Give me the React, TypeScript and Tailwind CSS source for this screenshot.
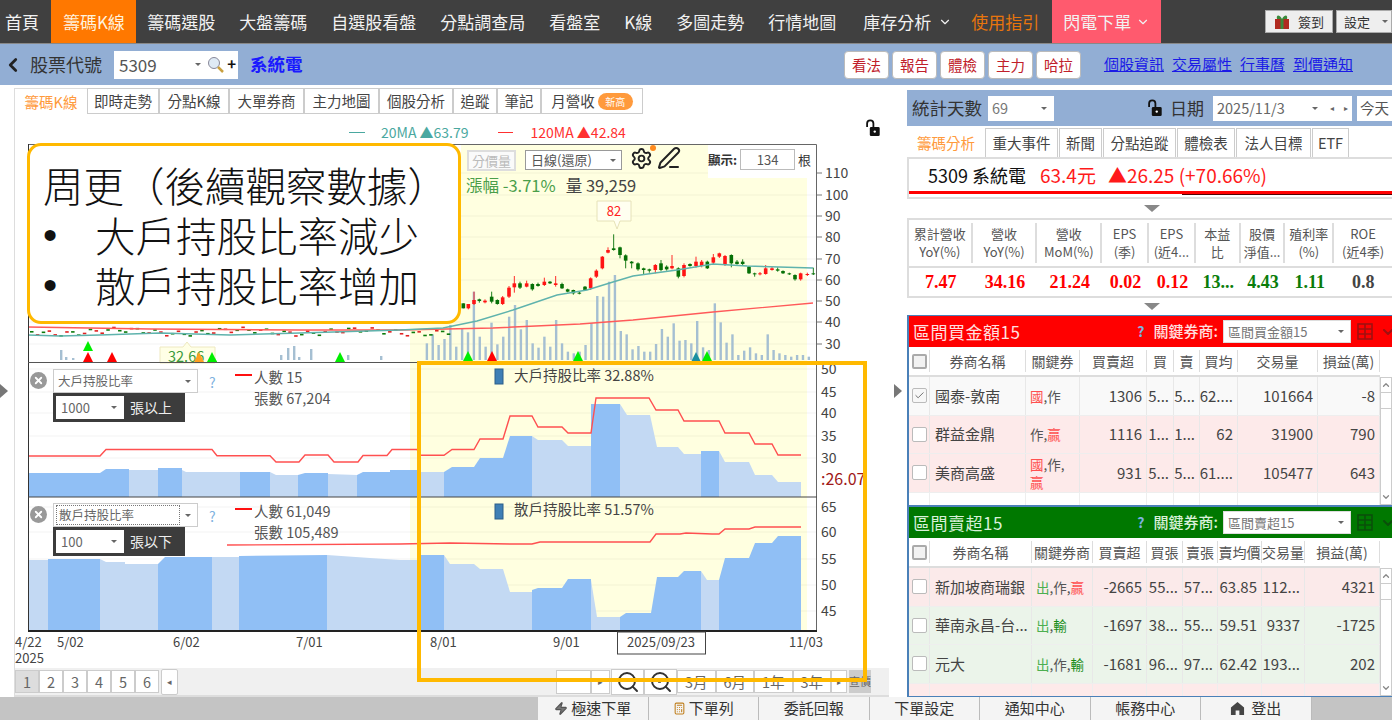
import React from 'react';
import { ChevronDown, ChevronLeft, ChevronUp, Search, Settings, PenLine, Zap, Check, Calculator, X } from 'lucide-react';

const navItems = ['籌碼選股', '大盤籌碼', '自選股看盤', '分點調查局', '看盤室', 'K線', '多圖走勢', '行情地圖'];
const chartTabs = [
  { label: '即時走勢', w: 'w-[72px]' },
  { label: '分點K線', w: 'w-[70px]' },
  { label: '大單券商', w: 'w-[75px]' },
  { label: '主力地圖', w: 'w-[75px]' },
  { label: '個股分析', w: 'w-[74px]' },
  { label: '追蹤', w: 'w-[44px]' },
  { label: '筆記', w: 'w-[44px]' },
];
const sideTabs = [
  { label: '重大事件', w: 'w-[73px]' },
  { label: '新聞', w: 'w-[43px]' },
  { label: '分點追蹤', w: 'w-[73px]' },
  { label: '體檢表', w: 'w-[58px]' },
  { label: '法人目標', w: 'w-[75px]' },
  { label: 'ETF', w: 'w-[37px]' },
];
const stats = [
  { top: '累計營收', sub: 'YoY(%)', val: '7.47', color: 'text-[#ff0000]', w: 'w-[64px]' },
  { top: '營收', sub: 'YoY(%)', val: '34.16', color: 'text-[#ff0000]', w: 'w-[65px]' },
  { top: '營收', sub: 'MoM(%)', val: '21.24', color: 'text-[#ff0000]', w: 'w-[65px]' },
  { top: 'EPS', sub: '(季)', val: '0.02', color: 'text-[#ff0000]', w: 'w-[47px]' },
  { top: 'EPS', sub: '(近4...', val: '0.12', color: 'text-[#ff0000]', w: 'w-[47px]' },
  { top: '本益', sub: '比', val: '13...', color: 'text-[#0a7d0a]', w: 'w-[45px]' },
  { top: '股價', sub: '淨值...', val: '4.43', color: 'text-[#0a7d0a]', w: 'w-[45px]' },
  { top: '殖利率', sub: '(%)', val: '1.11', color: 'text-[#0a7d0a]', w: 'w-[49px]' },
  { top: 'ROE', sub: '(近4季)', val: '0.8', color: 'text-[#444]', w: 'w-[58px]' },
];

const keyColors: Record<string, string> = {
  國: 'text-[#ff5050]',
  贏: 'text-[#ff5050]',
  作: 'text-[#555]',
  出: 'text-[#4caf50]',
  輸: 'text-[#138a13]',
};

const buyRows = [
  { checked: true, bg: 'bg-[#f9f9f9]', cells: ['國泰-敦南', '國,作', '1306', '5...', '5...', '62....', '101664', '-8'] },
  { bg: 'bg-[#fdeaea]', cells: ['群益金鼎', '作,贏', '1116', '1...', '1...', '62', '31900', '790'] },
  { bg: 'bg-[#fdeaea]', cells: ['美商高盛', '國,作,贏', '931', '5...', '5...', '61....', '105477', '643'] },
];
const sellRows = [
  { bg: 'bg-[#fbeaea]', cells: ['新加坡商瑞銀', '出,作,贏', '-2665', '55...', '57...', '63.85', '112...', '4321'] },
  { bg: 'bg-[#ebf4ea]', cells: ['華南永昌-台...', '出,輸', '-1697', '38...', '55...', '59.51', '9337', '-1725'] },
  { bg: 'bg-[#ebf4ea]', cells: ['元大', '出,作,輸', '-1681', '96...', '97...', '62.42', '193...', '202'] },
];

// candles: [x, bodyTop, bodyBottom, wickTop, wickBottom, up]
const candles: [number, number, number, number, number, number][] = [
  [190, 490, 505, 490, 505, 0], [205, 492, 505, 492, 508, 1], [222, 480, 492, 455, 495, 1], [238, 478, 483, 476, 488, 0],
  [255, 482, 487, 478, 490, 1], [275, 470, 485, 455, 490, 0], [292, 480, 492, 478, 494, 0], [308, 472, 492, 468, 495, 1],
  [327, 443, 470, 438, 474, 1], [343, 430, 442, 408, 458, 1], [360, 430, 443, 425, 447, 0], [380, 430, 440, 422, 442, 1],
  [397, 432, 448, 430, 452, 0], [414, 432, 438, 428, 440, 0], [433, 425, 435, 413, 438, 1], [450, 425, 430, 423, 432, 0],
  [467, 430, 435, 408, 440, 1], [486, 432, 445, 428, 447, 0], [503, 448, 455, 446, 457, 0], [520, 450, 460, 449, 464, 0],
  [538, 458, 460, 456, 463, 0], [555, 440, 450, 438, 452, 0], [572, 415, 445, 412, 450, 1], [589, 392, 410, 388, 414, 1],
  [607, 350, 385, 348, 388, 1], [624, 330, 338, 322, 340, 1], [641, 325, 330, 283, 332, 0], [660, 322, 345, 320, 355, 0],
  [677, 346, 362, 343, 385, 0], [695, 365, 370, 363, 385, 0], [714, 370, 388, 367, 392, 0], [731, 385, 390, 383, 403, 0],
  [748, 388, 392, 386, 398, 0], [766, 375, 390, 372, 400, 1], [783, 370, 390, 360, 394, 0], [800, 380, 388, 376, 392, 0],
  [816, 378, 385, 345, 388, 1], [835, 385, 410, 382, 415, 0], [852, 375, 408, 370, 412, 1], [870, 372, 378, 370, 380, 0],
  [888, 365, 378, 350, 383, 1], [905, 365, 378, 360, 382, 1], [922, 365, 385, 362, 387, 0], [940, 352, 368, 342, 372, 1],
  [958, 340, 350, 338, 354, 1], [975, 348, 375, 345, 378, 1], [994, 345, 370, 343, 382, 0], [1011, 365, 372, 360, 374, 0],
  [1028, 365, 372, 358, 376, 0], [1047, 380, 400, 378, 402, 0], [1064, 400, 403, 398, 410, 0], [1080, 400, 403, 396, 406, 1],
  [1097, 385, 402, 375, 404, 1], [1116, 385, 390, 380, 392, 1], [1133, 388, 392, 382, 395, 0], [1149, 393, 400, 391, 402, 0],
  [1168, 400, 403, 398, 405, 0], [1185, 405, 418, 403, 422, 0], [1202, 400, 418, 398, 422, 1], [1222, 402, 405, 398, 408, 1],
  [1240, 400, 403, 383, 405, 0],
];
const volumes = [610, 583, 615, 597, 555, 620, 565, 577, 455, 590, 620, 548, 613, 590, 530, 495, 568, 540, 610, 623, 590, 620, 540, 610, 635, 640, 635, 615, 550, 468, 470, 425, 405, 573, 583, 628, 618, 635, 635, 612, 567, 590, 550, 602, 600, 610, 543, 622, 630, 490, 547, 608, 583, 645, 632, 622, 640, 645, 583, 630, 640, 645, 650, 645, 645, 650];
const leftVolumes = [[60, 350], [65, 357], [72, 358], [280, 355], [287, 348], [293, 346], [298, 357], [310, 349], [347, 355], [380, 356]];

// area bands: [x0, top0, x1, top1, dark]
const bands2: number[][] = [
  [28, 473, 100, 473, 1], [100, 473, 106, 469, 1], [106, 469, 129, 469, 1], [129, 470, 158, 470, 0], [158, 468, 182, 468, 1], [182, 470, 186, 472, 0],
  [186, 472, 240, 472, 0], [240, 472, 270, 472, 1], [270, 472, 276, 475, 0], [276, 475, 298, 475, 0], [298, 475, 305, 473, 1], [305, 473, 328, 473, 1],
  [328, 474, 357, 475, 0], [357, 475, 363, 472, 1], [363, 472, 390, 472, 1], [390, 470, 417, 470, 1], [417, 472, 444, 472, 0], [444, 472, 452, 467, 1],
  [452, 467, 474, 467, 1], [474, 467, 480, 458, 1], [480, 458, 503, 458, 1], [503, 458, 510, 436, 1], [510, 436, 532, 436, 1], [532, 436, 538, 440, 0],
  [538, 440, 562, 440, 0], [562, 440, 568, 446, 0], [568, 446, 591, 446, 0], [591, 404, 620, 404, 1], [620, 404, 627, 415, 0], [627, 415, 650, 415, 0],
  [650, 415, 657, 447, 0], [657, 447, 678, 447, 0], [678, 447, 684, 454, 0], [684, 454, 701, 454, 0], [701, 451, 719, 451, 1], [719, 451, 725, 462, 0],
  [725, 462, 749, 462, 0], [749, 462, 755, 475, 0], [755, 475, 772, 475, 0], [772, 475, 778, 482, 0], [778, 482, 801, 482, 0],
];
const bands3: number[][] = [
  [28, 560, 48, 560, 0], [48, 559, 100, 559, 1], [100, 559, 106, 562, 0], [106, 562, 125, 562, 0], [125, 564, 158, 564, 0], [158, 564, 165, 557, 1],
  [165, 557, 212, 557, 1], [212, 557, 239, 557, 0], [239, 556, 327, 555, 1], [327, 555, 370, 558, 0], [370, 558, 400, 560, 0], [400, 560, 417, 560, 0],
  [417, 555, 444, 555, 1], [444, 555, 450, 564, 0], [450, 564, 474, 564, 0], [474, 564, 480, 569, 0], [480, 569, 503, 569, 0], [503, 569, 510, 592, 0],
  [510, 592, 532, 592, 0], [532, 590, 538, 588, 1], [538, 588, 562, 588, 1], [562, 588, 568, 579, 1], [568, 579, 591, 579, 1], [591, 580, 597, 617, 0],
  [597, 617, 620, 617, 0], [620, 617, 626, 613, 1], [626, 613, 651, 613, 1], [651, 613, 657, 577, 1], [657, 577, 678, 577, 1], [678, 577, 684, 571, 1],
  [684, 571, 701, 571, 1], [701, 571, 707, 580, 0], [707, 580, 719, 580, 0], [719, 580, 725, 558, 1], [725, 558, 749, 558, 1], [749, 558, 755, 543, 1],
  [755, 543, 772, 543, 1], [772, 543, 778, 536, 1], [778, 536, 801, 536, 1],
];

const big2 = '28,456 100,456 106,449.5 212,449.5 217,455.7 270,455.7 276,462 299,462 305,455 328,455 334,462 358,462 363,455.5 387,455.5 392,449.5 417,449.5 420,455.3 444,455.3 452,449.5 474,449.5 480,439 503,439 510,416 532,416 538,427 562,427 568,433 591,433 596,398 649,398 656,410 678,410 684,421 719,421 725,433 749,433 755,444 772,444 778,455 801,455';
const small3 = '227,545 400,544 450,543 510,544 532,544 540,542 600,542 650,542 656,534 680,534 686,533 712,534 719,534 725,529 749,529 755,527 801,527';
const ma20 = '28,335 60,336 100,335 160,333 230,335 300,333 400,330 443,328 477,321 513,310 557,295 587,290 613,282 633,276 677,270 713,264 747,266 813,268';
const ma120 = '28,327 150,329 300,330 400,330 493,328 580,324 633,320 713,312 813,303';

const axisTop = [[110, 173], [100, 195], [90, 216], [80, 237], [70, 259], [60, 280], [50, 301], [40, 322], [30, 344]];
const axis2 = [[50, 369], [45, 392], [40, 413], [35, 436], [30, 458]];
const axis3 = [[65, 507], [60, 532], [55, 559], [50, 585], [45, 611]];
const dates = [['5/02', 57], ['6/02', 173], ['7/01', 296], ['8/01', 430], ['9/01', 553], ['11/03', 789]] as const;
const markers = [
  [88, 341, '#00ee00'], [88, 352, '#ff0000'], [112, 352, '#ff0000'], [199, 352, '#ffa020'], [212, 352, '#00ee00'], [340, 352, '#00ee00'],
  [468, 351, '#00ee00'], [492, 351, '#ff0000'], [578, 351, '#00ee00'], [696, 352, '#1a8fa0'], [707, 351, '#00ee00'],
] as const;

function LockIcon({ className }: { className?: string }) {
  return (
    <svg viewBox="0 0 18 20" className={className}>
      <path d="M3 9V5a3.5 3.5 0 0 1 7 0v4" fill="none" stroke="#111" strokeWidth="2" />
      <rect x="6" y="9" width="11" height="10" rx="1.5" fill="#111" />
      <circle cx="11.5" cy="14" r="1.3" fill="#fff" />
    </svg>
  );
}

function Caret({ className = '' }: { className?: string }) {
  return <span className={`w-0 h-0 border-x-[3px] border-x-transparent border-t-[3px] border-t-[#666] ${className}`} />;
}

function GridIcon({ color }: { color: string }) {
  return (
    <svg viewBox="0 0 16 17" className="w-[16px] h-[17px]" fill="none" stroke={color} strokeWidth="1.6">
      <rect x="1" y="1" width="14" height="15" />
      <path d="M8 1v15M1 6h14M1 11h14" />
    </svg>
  );
}

function Box({ checked, dim }: { checked?: boolean; dim?: boolean }) {
  return (
    <span className={`w-[15px] h-[15px] border rounded-[2px] flex items-center justify-center ${dim ? 'border-[#bbb] bg-[#f7f7f7]' : 'border-[#bbb] bg-white'}`}>
      {checked && <Check className="w-[11px] h-[11px] text-[#666]" />}
    </span>
  );
}

function Keys({ text }: { text: string }) {
  const parts = text.split(',');
  return (
    <span className="text-[13.5px] leading-[18px] break-all">
      {parts.map((p, i) => (
        <span key={i} className="inline">
          <span className={keyColors[p]}>{p}</span>
          {i < parts.length - 1 && <span className="text-[#555]">,</span>}
        </span>
      ))}
    </span>
  );
}

function BrokerTable(props: {
  title: string;
  select: string;
  headBg: string;
  titleColor: string;
  iconColor: string;
  cols: string;
  heads: string[];
  rows: { checked?: boolean; bg: string; cells: string[] }[];
  fillBg: string;
}) {
  const { title, select, headBg, titleColor, iconColor, cols, heads, rows, fillBg } = props;
  return (
    <div className="h-[191px] border-l-2 border-y border-[#4a80b8] bg-white overflow-hidden flex flex-col">
      <div className={`h-[31px] shrink-0 flex items-center pl-[4px] ${headBg}`}>
        <span className={`text-[17px] tracking-[0.5px] ${titleColor}`}>{title}</span>
        <span className="ml-auto text-[#7fb2e0] font-bold text-[14px]">?</span>
        <span className={`ml-[9px] text-[15px] font-medium ${titleColor}`}>關鍵券商:</span>
        <div className="ml-[5px] w-[128px] h-[23px] bg-white border border-[#ddd] flex items-center px-[4px] text-[13px] text-[#777]">
          {select}
          <Caret className="ml-auto mr-[2px]" />
        </div>
        <span className="ml-[6px]"><GridIcon color={iconColor} /></span>
        <ChevronDown className="w-[16px] h-[16px] ml-[7px] -mr-[4px]" style={{ color: iconColor }} strokeWidth={3} />
      </div>
      <div className="flex flex-1 min-h-0">
        <div className="w-[471px] flex flex-col">
          <div className={`grid ${cols} h-[30px] shrink-0 border-b-2 border-[#ddd] text-[14px] text-[#555]`}>
            <div className="flex items-center justify-center border-r border-[#ddd] my-[3px]">
              <span className="w-[15px] h-[15px] border-2 border-[#aaa] bg-[#f2f2f2] rounded-[2px]" />
            </div>
            {heads.map((h) => (
              <div key={h} className="flex items-center justify-center border-r border-[#ddd] my-[3px] whitespace-nowrap overflow-hidden">{h}</div>
            ))}
          </div>
          {rows.map((r) => (
            <div key={r.cells[0]} className={`grid ${cols} h-[38.5px] shrink-0 border-b border-[#eee] text-[15px] text-[#444] ${r.bg}`}>
              <div className="flex items-center justify-center border-r border-[#e8e8e8]"><Box checked={r.checked} dim={r.checked} /></div>
              <div className="flex items-center px-[5px] border-r border-[#e8e8e8] whitespace-nowrap overflow-hidden">{r.cells[0]}</div>
              <div className="flex items-center px-[4px] border-r border-[#e8e8e8]"><Keys text={r.cells[1]} /></div>
              {r.cells.slice(2).map((c, i) => (
                <div key={i} className="flex items-center justify-end px-[4px] border-r border-[#e8e8e8] whitespace-nowrap overflow-hidden">{c}</div>
              ))}
            </div>
          ))}
          <div className={`grid ${cols} flex-1 ${fillBg}`}>
            {[0, 1, 2, 3, 4, 5, 6, 7, 8].map((i) => <div key={i} className="border-r border-[#eee]" />)}
          </div>
        </div>
        <div className="w-[12px] mt-[30px] border border-[#ccc] bg-white flex flex-col items-center">
          <ChevronUp className="w-[10px] h-[14px] text-[#888]" strokeWidth={3} />
          <div className="w-full h-[17px] border-y border-[#ccc]" />
          <ChevronDown className="w-[10px] h-[14px] text-[#888] mt-auto" strokeWidth={3} />
        </div>
      </div>
    </div>
  );
}

function PaneControls(props: { name: string; value: string; label: string; line1: string; line2: string; dotted?: boolean; top: string }) {
  return (
    <div className={`absolute left-[15px] ${props.top} w-[320px] h-[54px] text-[#555]`}>
      <span className="absolute left-0 top-[3px] w-[17px] h-[17px] rounded-full bg-[#999] flex items-center justify-center">
        <X className="w-[11px] h-[11px] text-white" strokeWidth={4} />
      </span>
      <div className="absolute left-[23px] top-0 w-[145px] h-[24px] bg-white border border-[#ccc] flex items-center px-[4px] text-[12.5px] text-[#666]">
        <span className={props.dotted ? 'border border-dotted border-[#777] w-[124px] -ml-[2px] pl-[2px]' : ''}>{props.name}</span>
        <Caret className="ml-auto mr-[2px]" />
      </div>
      <span className="absolute left-[179px] top-[3px] text-[#7fb2e0] text-[14px]">?</span>
      <div className="absolute left-[23px] top-[24px] w-[132px] h-[29px] bg-[#3c3c3c] flex items-center pl-[3px]">
        <div className="w-[68px] h-[23px] bg-white flex items-center px-[5px] text-[13px] text-[#666]">
          {props.value}
          <Caret className="ml-auto mr-[2px]" />
        </div>
        <span className="ml-[6px] text-[14px] text-[#eee]">{props.label}</span>
      </div>
      <span className="absolute left-[205px] top-[5px] w-[17px] h-[2px] bg-[#ff1010]" />
      <span className="absolute left-[224px] -top-[2px] text-[14.5px] leading-[20px] whitespace-nowrap">{props.line1}</span>
      <span className="absolute left-[224px] top-[19px] text-[14.5px] leading-[20px] whitespace-nowrap">{props.line2}</span>
    </div>
  );
}

function ChartSvg() {
  const leftCandles = Array.from({ length: 72 }, (_, i) => {
    const x = 30 + i * 5.87;
    const y = 331 + Math.sin(i * 1.7) * 2.5 + Math.sin(i * 0.31) * 2;
    return { x, y, up: Math.sin(i * 2.3) > 0.1 };
  });
  return (
    <svg viewBox="15 114 874 554" className="absolute inset-0 w-[874px] h-[554px]">
      <rect x="461" y="145" width="247" height="33" fill="#ffffe0" />
      <rect x="410" y="178" width="397" height="452" fill="#ffffe0" />
      {axisTop.concat(axis2, axis3).map(([, y]) => (
        <line key={y} x1="29" x2="816" y1={y} y2={y} stroke="#000" strokeOpacity="0.05" />
      ))}
      {volumes.map((top, i) => (
        <rect key={i} x={400 + (80 + i * 17.63) / 3 - 1} y={140 + top / 3} width="2.4" height={360 - (140 + top / 3)} fill="#a5bfd2" />
      ))}
      {leftVolumes.map(([x, y]) => <rect key={x} x={x} y={y} width="2.4" height={360 - y} fill="#a5bfd2" />)}
      {leftCandles.map((c, i) => (
        <rect key={i} x={c.x} y={c.y} width="3.5" height="1.6" fill={c.up ? '#e02020' : '#0b7a0b'} />
      ))}
      {candles.map(([x, t, b, wt, wb, up], i) => {
        const cx = 400 + x / 3;
        const color = up ? '#ff1414' : '#067006';
        return (
          <g key={i}>
            <line x1={cx} x2={cx} y1={140 + wt / 3} y2={140 + wb / 3} stroke={color} strokeWidth="0.9" />
            <rect x={cx - 1.8} y={140 + t / 3} width="3.6" height={Math.max((b - t) / 3, 1)} fill={color} />
          </g>
        );
      })}
      <polyline points={ma120} fill="none" stroke="#ff5a5a" strokeWidth="1.4" />
      <polyline points={ma20} fill="none" stroke="#5fb3ad" strokeWidth="1.4" />
      {markers.map(([x, y, c], i) => (
        <polygon key={i} points={`${x - 5},${y + 10} ${x + 5},${y + 10} ${x},${y}`} fill={c} />
      ))}
      <path d="M597 201h34v20h-11l-3 8-3-8h-17z" fill="#fffff0" stroke="#e6e2b8" />
      <text x="614" y="216" textAnchor="middle" fontSize="13" fill="#ff2020">82</text>
      <path d="M160 347h23l4-5 4 5h24v16h-55z" fill="#ffffe6" stroke="#eee9c0" />
      <text x="168" y="362" fontSize="14.5" fill="#3a9a3a">32.66</text>
      {markers.slice(3, 5).map(([x, y, c], i) => (
        <polygon key={i} points={`${x - 5},${y + 10} ${x + 5},${y + 10} ${x},${y}`} fill={c} />
      ))}
      {bands2.map(([x0, t0, x1, t1, d], i) => (
        <polygon key={i} points={`${x0},497 ${x0},${t0} ${x1},${t1} ${x1},497`} fill={d ? '#90bff5' : '#c3d9f3'} />
      ))}
      {bands3.map(([x0, t0, x1, t1, d], i) => (
        <polygon key={i} points={`${x0},631 ${x0},${t0} ${x1},${t1} ${x1},631`} fill={d ? '#90bff5' : '#c3d9f3'} />
      ))}
      <polyline points={big2} fill="none" stroke="#ff5050" strokeWidth="1.4" />
      <polyline points={small3} fill="none" stroke="#ff5050" strokeWidth="1.4" />
      <path d="M28 144.5H816.5V631" fill="none" stroke="#666" />
      <line x1="28.5" x2="28.5" y1="144" y2="631" stroke="#333" />
      <line x1="28" x2="817" y1="362.5" y2="362.5" stroke="#555" />
      <line x1="28" x2="817" y1="497" y2="497" stroke="#444" />
      <line x1="28" x2="817" y1="631" y2="631" stroke="#222" strokeWidth="2" />
      {axisTop.map(([v, y]) => (
        <g key={v}>
          <line x1="817" x2="822" y1={y} y2={y} stroke="#777" />
          <text x="825" y={y + 5} fontSize="14" fill="#444">{v}</text>
        </g>
      ))}
      {axis2.concat(axis3).map(([v, y]) => (
        <text key={y} x="821" y={y + 5} fontSize="14" fill="#444">{v}</text>
      ))}
      <text x="821" y="485" fontSize="16" fill="#a01818">:26.07</text>
      {dates.map(([t, x]) => (
        <text key={t} x={x} y="647" fontSize="13" fill="#444">{t}</text>
      ))}
      <text x="15" y="647" fontSize="13" fill="#444">4/22</text>
      <text x="15" y="663" fontSize="13" fill="#444">2025</text>
      <rect x="617.5" y="632" width="88" height="22" fill="#fff" stroke="#444" />
      <text x="661" y="647" textAnchor="middle" fontSize="13" fill="#444">2025/09/23</text>
      <rect x="495" y="369" width="8" height="15" fill="#3f7fb5" stroke="#2d5f88" />
      <text x="514" y="381" fontSize="14.5" fill="#444">大戶持股比率 32.88%</text>
      <rect x="495" y="504" width="8" height="15" fill="#3f7fb5" stroke="#2d5f88" />
      <text x="514" y="515" fontSize="14.5" fill="#444">散戶持股比率 51.57%</text>
    </svg>
  );
}

export default function App() {
  return (
    <div className="w-[1392px] h-[720px] overflow-hidden bg-white flex flex-col text-[#444] font-['Noto_Sans_CJK_TC','Noto_Sans',sans-serif]">
      {/* top nav */}
      <div className="h-[44px] shrink-0 bg-[#404040] border-b border-[#888] flex items-stretch text-[17px] text-[#f2f2f2] whitespace-nowrap">
        <span className="pl-[5px] w-[52px] flex items-center">首頁</span>
        <span className="w-[86px] bg-[#ff7800] text-[#fff2dd] flex items-center justify-center">籌碼K線</span>
        <div className="flex items-center gap-[24px] pl-[11px]">
          {navItems.map((n) => <span key={n}>{n}</span>)}
        </div>
        <span className="flex items-center ml-[27px]">庫存分析<ChevronDown className="w-[14px] h-[14px] ml-[7px]" /></span>
        <span className="flex items-center ml-[19px] text-[#e8750c]">使用指引</span>
        <span className="ml-[13px] w-[110px] bg-[#ff5a6e] flex items-center justify-center">閃電下單<ChevronDown className="w-[14px] h-[14px] ml-[5px]" /></span>
        <div className="ml-[104px] flex items-center gap-[3px] text-[13px] text-[#333]">
          <span className="w-[68px] h-[23px] shrink-0 bg-[#eee] border border-[#aaa] flex items-center justify-center gap-[8px]">
            <svg viewBox="0 0 16 16" className="w-[16px] h-[16px]">
              <rect x="1" y="5" width="14" height="10" fill="#b02a20" />
              <rect x="6.5" y="5" width="3" height="10" fill="#3b8a3b" />
              <path d="M8 5C5 0 2 1 3 5zM8 5c3-5 6-4 5 0z" fill="#3b8a3b" />
            </svg>
            簽到
          </span>
          <span className="w-[56px] h-[23px] shrink-0 bg-[#eee] border border-[#aaa] flex items-center pl-[7px]">
            設定
            <Caret className="ml-auto mr-[3px]" />
          </span>
        </div>
      </div>

      {/* stock bar */}
      <div className="h-[41px] shrink-0 bg-[#92aed4] flex items-center">
        <ChevronLeft className="w-[22px] h-[24px] ml-[2px] text-[#222]" strokeWidth={3} />
        <span className="ml-[6px] text-[18px] text-[#333]">股票代號</span>
        <div className="ml-[12px] w-[124px] h-[28px] bg-white flex items-center pl-[5px] text-[17px] text-[#555]">
          5309
          <Caret className="ml-auto border-t-[#333]" />
          <svg viewBox="0 0 18 18" className="w-[18px] h-[18px] ml-[6px]">
            <circle cx="7" cy="7" r="5.5" fill="#dfeaf5" stroke="#889" />
            <path d="M11 11l5 5" stroke="#c9a040" strokeWidth="2.5" />
          </svg>
          <span className="ml-[2px] mr-[2px] text-[#111] font-bold text-[15px]">+</span>
        </div>
        <span className="ml-[12px] text-[#1a1aff] font-bold text-[17.5px]">系統電</span>
        <div className="ml-auto flex items-center gap-[3px]">
          {['看法', '報告', '體檢', '主力', '哈拉'].map((b) => (
            <span key={b} className="w-[45px] h-[28px] bg-white border border-[#bbb] rounded-[4px] text-[#c0202a] text-[14.5px] flex items-center justify-center">{b}</span>
          ))}
        </div>
        <div className="ml-[23px] mr-[39px] flex items-center gap-[8px] text-[15px] text-[#1a1ae6] underline whitespace-nowrap">
          <span>個股資訊</span><span>交易屬性</span><span>行事曆</span><span>到價通知</span>
        </div>
      </div>

      {/* main */}
      <div className="h-[612px] shrink-0 flex">
        <div className="w-[14px] flex items-center">
          <span className="w-0 h-0 border-y-[7px] border-y-transparent border-l-[8px] border-l-[#777]" />
        </div>
        <div className="w-[875px] flex flex-col pt-[3px]">
          <div className="h-[26px] flex text-[14.5px] text-[#444] shrink-0 whitespace-nowrap">
            <span className="w-[73px] h-[26px] bg-white border-l border-t border-[#ddd] text-[#ff9a3c] flex items-center justify-center">籌碼K線</span>
            {chartTabs.map((t) => (
              <span key={t.label} className={`${t.w} h-[26px] bg-white border border-[#ccc] flex items-center justify-center`}>{t.label}</span>
            ))}
            <span className="w-[102px] h-[26px] bg-white border border-[#ccc] flex items-center justify-center gap-[3px]">
              月營收
              <span className="w-[35px] h-[17px] rounded-full bg-[#ff9a3c] text-white text-[10px] flex items-center justify-center">新高</span>
            </span>
          </div>
          <div className="relative h-[554px] border-l border-[#ddd] shrink-0">
            <ChartSvg />
            {/* MA legend */}
            <div className="absolute left-[334px] top-[8px] flex items-center text-[14px] whitespace-nowrap">
              <span className="w-[16px] h-px bg-[#4aa8a0]" />
              <span className="ml-[16px] text-[#4aa8a0]">20MA ▲63.79</span>
              <span className="ml-[29px] w-[15px] h-px bg-[#ff3030]" />
              <span className="ml-[18px] text-[#ff3030]">120MA ▲42.84</span>
            </div>
            <LockIcon className="absolute left-[849px] top-[5px] w-[17px] h-[18px]" />
            {/* chart toolbar */}
            <span className="absolute left-[452px] top-[36px] w-[49px] h-[21px] border-2 border-[#ddd] bg-[#fafafa] text-[13px] text-[#bbb] flex items-center justify-center">分價量</span>
            <div className="absolute left-[510px] top-[36px] w-[97px] h-[20px] border border-[#999] bg-white flex items-center px-[5px] text-[13px] text-[#555]">
              日線(還原)
              <Caret className="ml-auto" />
            </div>
            <Settings className="absolute left-[615px] top-[33px] w-[23px] h-[23px] text-[#222]" />
            <span className="absolute left-[635px] top-[31px] w-[6px] h-[6px] rounded-full bg-[#ff8a1e]" />
            <PenLine className="absolute left-[642px] top-[32px] w-[24px] h-[24px] text-[#222]" />
            <div className="absolute left-[693px] top-[31px] w-[108px] h-[33px] bg-white flex items-start pt-[4px] text-[13px] text-[#333]">
              <span className="font-bold text-[12.5px] pt-[2px]">顯示:</span>
              <span className="ml-[3px] w-[55px] h-[21px] border border-[#bbb] flex items-center justify-center text-[#555]">134</span>
              <span className="ml-[3px] pt-[1px]">根</span>
            </div>
            <div className="absolute left-[451px] top-[59px] text-[16.5px] whitespace-nowrap">
              <span className="text-[#4a9e4a]">漲幅 -3.71%</span>
              <span className="ml-[10px] text-[#444]">量 39,259</span>
            </div>
            <PaneControls top="top-[255px]" name="大戶持股比率" value="1000" label="張以上" line1="人數 15" line2="張數 67,204" />
            <PaneControls top="top-[389px]" name="散戶持股比率" value="100" label="張以下" line1="人數 61,049" line2="張數 105,489" dotted />
            {/* annotation */}
            <div className="absolute left-[12px] top-[29px] w-[434px] h-[181px] bg-white border-[3px] border-[#ffb900] rounded-[14px] pl-[13px] pt-[14px] text-[40.5px] leading-[50px] text-[#111] font-light whitespace-nowrap z-10">
              <div>周更（後續觀察數據）</div>
              <div className="flex"><span className="w-[52px] font-['Liberation_Sans',sans-serif]">•</span>大戶持股比率減少</div>
              <div className="flex"><span className="w-[52px] font-['Liberation_Sans',sans-serif]">•</span>散戶持股比率增加</div>
            </div>
            <div className="absolute left-[402px] top-[247px] w-[450px] h-[321px] border-[4px] border-[#ffb900] z-10" />
          </div>
          {/* bottom bar */}
          <div className="flex-1 bg-[#f0f0f0] border-l border-b-2 border-[#ddd] flex items-center text-[14.5px] text-[#666]">
            {['1', '2', '3', '4', '5', '6'].map((p) => (
              <span key={p} className={`w-[24px] h-[23px] border border-[#ccc] flex items-center justify-center ${p === '1' ? 'bg-[#ddd]' : 'bg-white'}`}>{p}</span>
            ))}
            <span className="ml-[2px] w-[17px] h-[26px] border border-[#ccc] bg-white rounded-[2px] flex items-center justify-center text-[9px]">◂</span>
            <span className="ml-[378px] w-[35px] h-[24px] border border-[#ccc] bg-white" />
            <span className="w-[19px] h-[24px] border border-[#ccc] bg-white flex items-center justify-center text-[9px]">▸</span>
            <span className="ml-px w-[33px] h-[26px] border border-[#ccc] bg-white flex items-center justify-center"><Search className="w-[24px] h-[24px] text-[#333]" /></span>
            <span className="w-[33px] h-[26px] border border-[#ccc] bg-white flex items-center justify-center relative">
              <Search className="w-[24px] h-[24px] text-[#333]" />
              <span className="absolute left-[12px] top-[8px] w-[5px] h-[5px] rounded-full border border-[#333]" />
            </span>
            {['3月', '6月', '1年', '3年'].map((p) => (
              <span key={p} className="w-[38.5px] h-[23px] border border-[#ccc] bg-white flex items-center justify-center">{p}</span>
            ))}
            <span className="w-[16px] h-[23px] border border-[#ccc] bg-white flex items-center justify-center text-[8px]">▸</span>
            <span className="ml-[2px] w-[22px] h-[23px] bg-[#ccc] flex items-center justify-center text-[11px] whitespace-nowrap overflow-hidden">查價</span>
          </div>
        </div>
        <div className="w-[18px] flex items-center justify-center">
          <span className="w-0 h-0 border-y-[7px] border-y-transparent border-l-[8px] border-l-[#777]" />
        </div>

        {/* right side */}
        <div className="w-[485px] flex flex-col pt-[5px]">
          <div className="h-[36px] shrink-0 bg-[#92aed4] flex items-center pl-[5px] text-[#333] overflow-hidden whitespace-nowrap">
            <span className="text-[17.5px]">統計天數</span>
            <div className="ml-[6px] w-[66px] h-[25px] shrink-0 bg-white flex items-center px-[4px] text-[14.5px] text-[#777]">69<Caret className="ml-auto mr-[3px]" /></div>
            <LockIcon className="ml-[92px] w-[17px] h-[18px] shrink-0" />
            <span className="ml-[7px] text-[17px]">日期</span>
            <div className="ml-[9px] w-[139px] h-[25px] shrink-0 bg-white flex items-center px-[4px] text-[14.5px] text-[#666]">
              2025/11/3
              <Caret className="ml-auto" />
              <span className="ml-[12px] text-[8px]">◂</span>
              <span className="ml-[10px] text-[8px]">▸</span>
            </div>
            <div className="ml-[5px] w-[50px] h-[25px] shrink-0 bg-white flex items-center pl-[3px] text-[14.5px] text-[#555]">今天</div>
          </div>
          <div className="h-[31px] shrink-0 flex text-[14.5px] pt-[2px] whitespace-nowrap">
            <span className="w-[78px] text-[#ff9a3c] flex items-center justify-center bg-white">籌碼分析</span>
            {sideTabs.map((t) => (
              <span key={t.label} className={`${t.w} border border-[#ccc] border-b-0 mr-px flex items-center justify-center text-[#444]`}>{t.label}</span>
            ))}
          </div>
          <div className="h-[42px] shrink-0 border-2 border-[#ddd] border-r-0 flex flex-col">
            <div className="h-[32px] flex items-center pl-[19px] whitespace-nowrap">
              <span className="text-[18px] text-[#111]">5309 系統電</span>
              <span className="ml-[14px] text-[19px] text-[#ff1a1a]">63.4元</span>
              <span className="ml-[12px] text-[19px] text-[#ff1a1a]">▲26.25 (+70.66%)</span>
            </div>
            <div className="h-[3px] bg-[#ff0000]" />
            <div className="h-px ml-[273px] bg-[#500]" />
          </div>
          <div className="h-[19px] shrink-0 flex items-center justify-center pl-[5px]">
            <span className="w-0 h-0 border-x-[8px] border-x-transparent border-t-[7px] border-t-[#888]" />
          </div>
          <div className="h-[80px] shrink-0 border-2 border-[#ddd] border-r-0 flex flex-col">
            <div className="h-[48px] flex border-b-2 border-[#ddd]">
              {stats.map((s) => (
                <div key={s.val} className={`${s.w} border-r-2 border-[#ddd] my-[3px] last:border-r-0 flex flex-col items-center justify-center text-[13px] leading-[18px] text-[#555] whitespace-nowrap overflow-hidden`}>
                  <span>{s.top}</span><span>{s.sub}</span>
                </div>
              ))}
            </div>
            <div className="flex-1 flex items-center">
              {stats.map((s) => (
                <span key={s.val} className={`${s.w} text-center font-['Liberation_Serif',serif] font-bold text-[18px] ${s.color}`}>{s.val}</span>
              ))}
            </div>
          </div>
          <div className="h-[17px] shrink-0 flex items-center justify-center pl-[5px]">
            <span className="w-0 h-0 border-x-[8px] border-x-transparent border-t-[7px] border-t-[#888]" />
          </div>
          <BrokerTable
            title="區間買金額15"
            select="區間買金額15"
            headBg="bg-[#ff0000]"
            titleColor="text-[#ffe0e0]"
            iconColor="#a01010"
            cols="grid-cols-[21px_96px_54px_67px_27px_26px_38px_80px_62px]"
            heads={['券商名稱', '關鍵券', '買賣超', '買', '賣', '買均', '交易量', '損益(萬)']}
            rows={buyRows}
            fillBg="bg-white"
          />
          <BrokerTable
            title="區間賣超15"
            select="區間賣超15"
            headBg="bg-[#007800]"
            titleColor="text-[#d8f0d8]"
            iconColor="#0a4f0a"
            cols="grid-cols-[21px_102px_61px_54px_36px_35px_44px_43px_75px]"
            heads={['券商名稱', '關鍵券商', '買賣超', '買張', '賣張', '賣均價', '交易量', '損益(萬)']}
            rows={sellRows}
            fillBg="bg-[#fdeaea]"
          />
        </div>
      </div>

      {/* footer */}
      <div className="flex-1 bg-[#c4c4c4] flex pl-[538px] text-[15px] text-[#333]">
        {['極速下單', '下單列', '委託回報', '下單設定', '通知中心', '帳務中心', '登出'].map((f) => (
          <span key={f} className="w-[110.5px] bg-[#f4f4f4] border-r border-[#bbb] flex items-center justify-center gap-[3px] whitespace-nowrap">
            {f === '極速下單' && <Zap className="w-[14px] h-[15px] text-[#555] fill-[#777]" />}
            {f === '下單列' && <Calculator className="w-[13px] h-[15px] text-[#c08020]" />}
            {f === '登出' && (
              <svg viewBox="0 0 16 16" className="w-[15px] h-[15px] mr-[3px]"><path d="M8 1L1 7v8h5v-5h4v5h5V7z" fill="#444" /></svg>
            )}
            {f}
          </span>
        ))}
      </div>
    </div>
  );
}
